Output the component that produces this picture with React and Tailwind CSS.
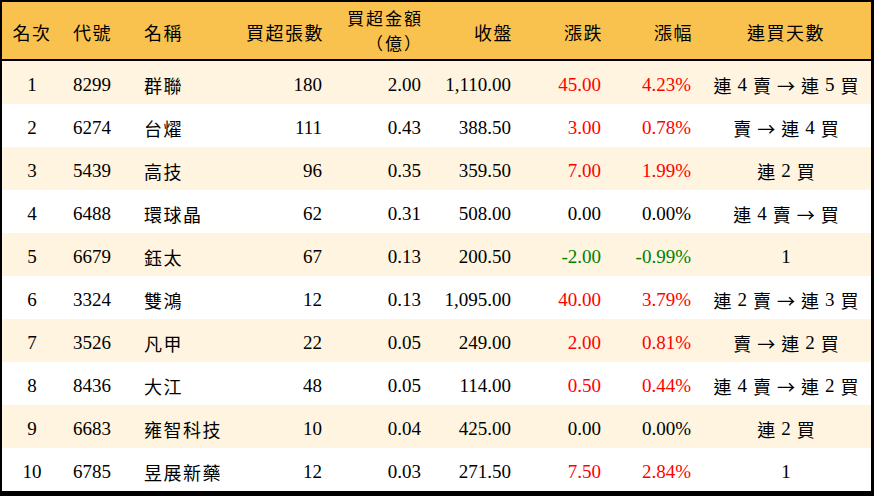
import React from "react";

// 外資買超排行 table
const rows = [
  ["1", "8299", "群聯", "180", "2.00", "1,110.00", "45.00", "4.23%", ["連", "4", "賣", "→", "連", "5", "買"]],
  ["2", "6274", "台燿", "111", "0.43", "388.50", "3.00", "0.78%", ["賣", "→", "連", "4", "買"]],
  ["3", "5439", "高技", "96", "0.35", "359.50", "7.00", "1.99%", ["連", "2", "買"]],
  ["4", "6488", "環球晶", "62", "0.31", "508.00", "0.00", "0.00%", ["連", "4", "賣", "→", "買"]],
  ["5", "6679", "鈺太", "67", "0.13", "200.50", "-2.00", "-0.99%", ["1"]],
  ["6", "3324", "雙鴻", "12", "0.13", "1,095.00", "40.00", "3.79%", ["連", "2", "賣", "→", "連", "3", "買"]],
  ["7", "3526", "凡甲", "22", "0.05", "249.00", "2.00", "0.81%", ["賣", "→", "連", "2", "買"]],
  ["8", "8436", "大江", "48", "0.05", "114.00", "0.50", "0.44%", ["連", "4", "賣", "→", "連", "2", "買"]],
  ["9", "6683", "雍智科技", "10", "0.04", "425.00", "0.00", "0.00%", ["連", "2", "買"]],
  ["10", "6785", "昱展新藥", "12", "0.03", "271.50", "7.50", "2.84%", ["1"]],
];

const cols = "grid grid-cols-[60px_71px_99px_100px_99px_90px_90px_90px_170px]";
const num = "font-['Liberation_Serif',serif] text-[19px]";
const cjk = "font-['Noto_Sans_CJK_TC',sans-serif] text-[18px] tracking-[1.5px]";

const changeColor = (v) => {
  if (v.startsWith("-")) return "text-[#008000]";
  if (parseFloat(v) === 0) return "text-black";
  return "text-[#ff0000]";
};

const Streak = ({ tokens }) => (
  <div className="flex items-center justify-center gap-[6px]">
    {tokens.map((t, i) =>
      /[0-9]/.test(t) ? (
        <span key={i} className={num}>{t}</span>
      ) : (
        <span key={i} className="font-['Noto_Sans_CJK_TC',sans-serif] text-[18px]">{t}</span>
      )
    )}
  </div>
);

export default function App() {
  return (
    <div className="w-[874px] h-[496px] box-border bg-white border-black border-t-2 border-l-2 border-r-[3px] border-b-[5px] flex flex-col text-black">
      {/* header */}
      <div className={`${cols} h-[59px] shrink-0 pt-[3px] bg-[#f9c24f] border-b-2 border-black items-center ${cjk}`}>
        <div className="text-center">名次</div>
        <div className="pl-[11px]">代號</div>
        <div className="pl-[11px]">名稱</div>
        <div className="text-right pr-[8px]">買超張數</div>
        <div className="text-right pr-[8px] text-[17px] tracking-[2px] leading-[25px] -mt-[4px]">
          <div>買超金額</div>
          <div>（億）</div>
        </div>
        <div className="text-right pr-[8px]">收盤</div>
        <div className="text-right pr-[8px]">漲跌</div>
        <div className="text-right pr-[8px]">漲幅</div>
        <div className="text-center">連買天數</div>
      </div>

      {/* body */}
      {rows.map((r, i) => (
        <div
          key={r[1]}
          className={`${cols} items-center pt-[5px] ${i === rows.length - 1 ? "flex-1" : "h-[43px] shrink-0"} ${
            i % 2 === 0 ? "bg-[#fef4df]" : "bg-white"
          }`}
        >
          <div className={`text-center ${num}`}>{r[0]}</div>
          <div className={`pl-[11px] ${num}`}>{r[1]}</div>
          <div className={`pl-[11px] ${cjk}`}>{r[2]}</div>
          <div className={`text-right pr-[10px] ${num}`}>{r[3]}</div>
          <div className={`text-right pr-[10px] ${num}`}>{r[4]}</div>
          <div className={`text-right pr-[10px] ${num}`}>{r[5]}</div>
          <div className={`text-right pr-[10px] ${num} ${changeColor(r[6])}`}>{r[6]}</div>
          <div className={`text-right pr-[10px] ${num} ${changeColor(r[7])}`}>{r[7]}</div>
          <Streak tokens={r[8]} />
        </div>
      ))}
    </div>
  );
}
